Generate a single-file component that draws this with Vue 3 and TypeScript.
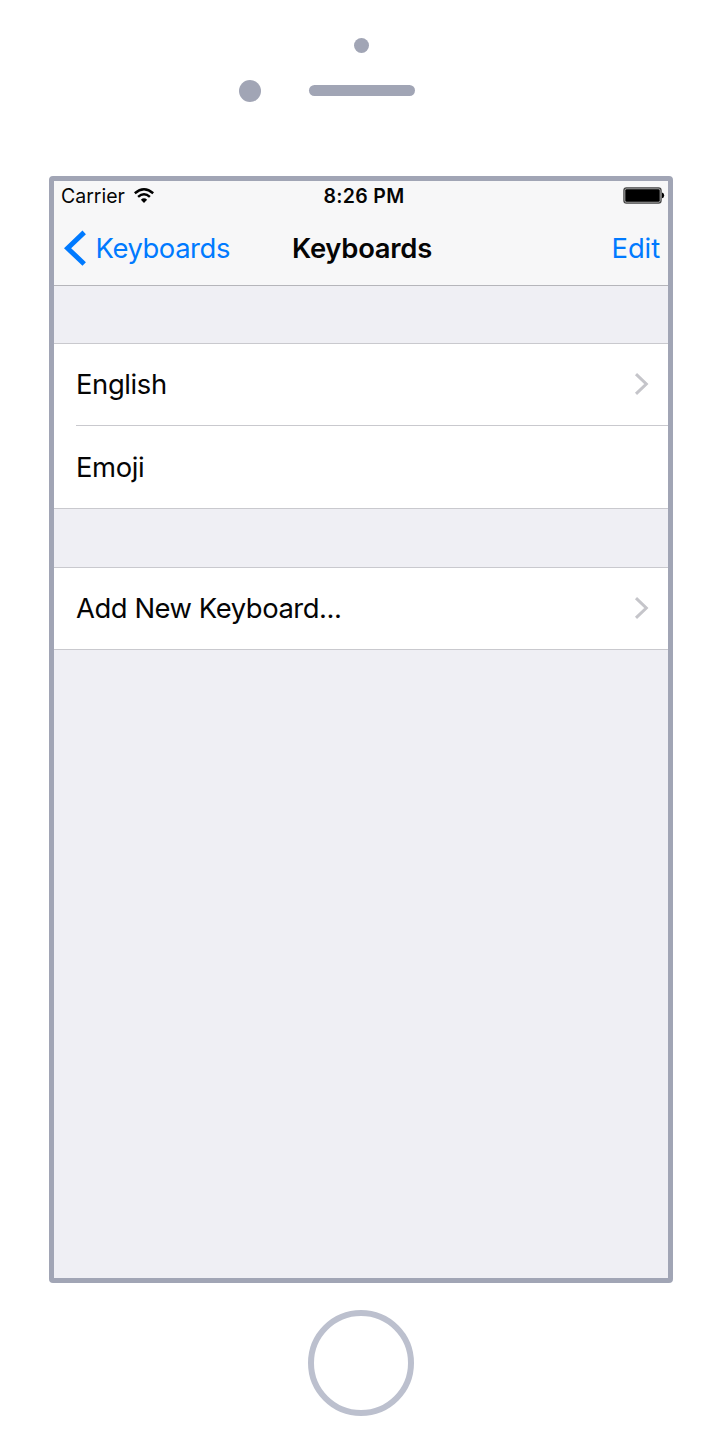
<script setup lang="ts">
interface Row {
  label: string
  kind: string
  chevron: boolean
}

const groups: Row[][] = [
  [
    { label: 'English', kind: 'english', chevron: true },
    { label: 'Emoji', kind: 'emoji', chevron: false },
  ],
  [{ label: 'Add New Keyboard...', kind: 'add', chevron: true }],
]
</script>

<template>
  <div class="device">
    <svg class="sensors" width="720" height="176" viewBox="0 0 720 176" fill="#a1a5b5">
      <circle cx="361.5" cy="45.5" r="7.5" />
      <circle cx="250" cy="91" r="11" />
      <rect x="309" y="85" width="106" height="11" rx="5.5" />
    </svg>

    <main class="screen">
      <header class="top">
        <div class="status">
          <div class="carrier">
            <span class="carrier-name">Carrier</span>
            <svg class="wifi" width="20" height="16" viewBox="0 0 20 16" fill="none" stroke="#000" stroke-width="2.5">
              <path d="M.8 5.2Q10-2.6 19.2 5.2" />
              <path d="M4.1 8.9Q10 3.7 15.9 8.9" />
              <path d="M10 15 6.9 11.8Q10 8.9 13.1 11.8Z" fill="#000" stroke="none" />
            </svg>
          </div>
          <span class="time">8:26 PM</span>
          <svg class="battery" width="42" height="17" viewBox="0 0 42 17">
            <rect x=".9" y=".9" width="37.2" height="15.2" rx="2.6" fill="#bbb" stroke="#444" stroke-width="1.2" />
            <rect x="2.3" y="2.3" width="34.4" height="12.4" rx="1.3" />
            <path d="M39 5.5Q41.2 6 41.2 8.4T39 11.3Z" />
          </svg>
        </div>
        <nav class="nav">
          <div class="back">
            <svg width="22" height="36" viewBox="0 0 22 36" fill="none" stroke="#007aff" stroke-width="5">
              <path d="M20.2 2.4 3.6 18.2 20.2 34" />
            </svg>
            <span class="back-label">Keyboards</span>
          </div>
          <span class="title">Keyboards</span>
          <span class="edit">Edit</span>
        </nav>
      </header>

      <section v-for="(group, g) in groups" :key="g" class="group">
        <div v-for="row in group" :key="row.label" class="row">
          <span :class="row.kind">{{ row.label }}</span>
          <svg v-if="row.chevron" class="chevron" width="16" height="24" viewBox="0 0 16 24" fill="none" stroke="#c5c5ca" stroke-width="3">
            <path d="M2 2.2 12.3 12 2 21.8" />
          </svg>
        </div>
      </section>
    </main>

    <div class="home"></div>
  </div>
</template>

<style>
body {
  margin: 0;
  background: #fff;
}
</style>

<style scoped>
.device {
  width: 720px;
  height: 1455px;
  overflow: hidden;
  background: #fff;
  font-family: Inter, "Liberation Sans", sans-serif;
  color: #050505;
}
.sensors {
  display: block;
}
.screen {
  box-sizing: border-box;
  width: 624px;
  height: 1107px;
  margin-left: 49px;
  border: 5px solid #a1a5b5;
  border-radius: 4px;
  background: #efeff4;
}
.top {
  box-sizing: border-box;
  height: 105px;
  background: #f7f7f8;
  border-bottom: 1px solid #b5b5ba;
}
.status {
  display: grid;
  grid-template-columns: 1fr auto 1fr;
  align-items: center;
  height: 30px;
  padding: 0 3px 0 7px;
  font-size: 20px;
  line-height: 30px;
}
.carrier {
  display: flex;
  align-items: center;
  gap: 9px;
}
.carrier-name {
  width: 64px;
  font-size: 19.5px;
}
.wifi {
  margin-bottom: 1px;
}
.time {
  margin-left: 2px;
  font-weight: 600;
  font-size: 19.5px;
  letter-spacing: 0.35px;
}
.battery {
  justify-self: end;
  margin-bottom: 1px;
}
.nav {
  display: grid;
  grid-template-columns: 1fr auto 1fr;
  align-items: center;
  height: 74px;
  padding: 0 8px 0 10px;
  font-size: 27.4px;
  line-height: 74px;
}
.back {
  display: flex;
  align-items: center;
  color: #007aff;
}
.back-label {
  margin-left: 9.5px;
  letter-spacing: -0.42px;
}
.title {
  font-weight: 600;
  letter-spacing: -0.25px;
}
.edit {
  justify-self: end;
  color: #007aff;
  letter-spacing: -0.1px;
}
.group {
  margin-top: 57px;
  background: #fff;
  border-top: 1px solid #c9c9ce;
  border-bottom: 1px solid #c9c9ce;
}
.group + .group {
  margin-top: 58px;
}
.row {
  display: flex;
  align-items: center;
  justify-content: space-between;
  height: 81px;
  margin-left: 22px;
  padding-right: 18px;
  font-size: 27.4px;
  line-height: 81px;
}
.row + .row {
  height: 82px;
  border-top: 1px solid #c9c9ce;
}
.english {
  letter-spacing: -0.38px;
}
.emoji {
  letter-spacing: -0.4px;
}
.add {
  letter-spacing: -0.44px;
}
.chevron {
  margin-bottom: 2px;
}
.home {
  box-sizing: border-box;
  width: 106px;
  height: 106px;
  margin: 27px 0 0 308px;
  border: 6px solid #bcc0ce;
  border-radius: 50%;
}
</style>
